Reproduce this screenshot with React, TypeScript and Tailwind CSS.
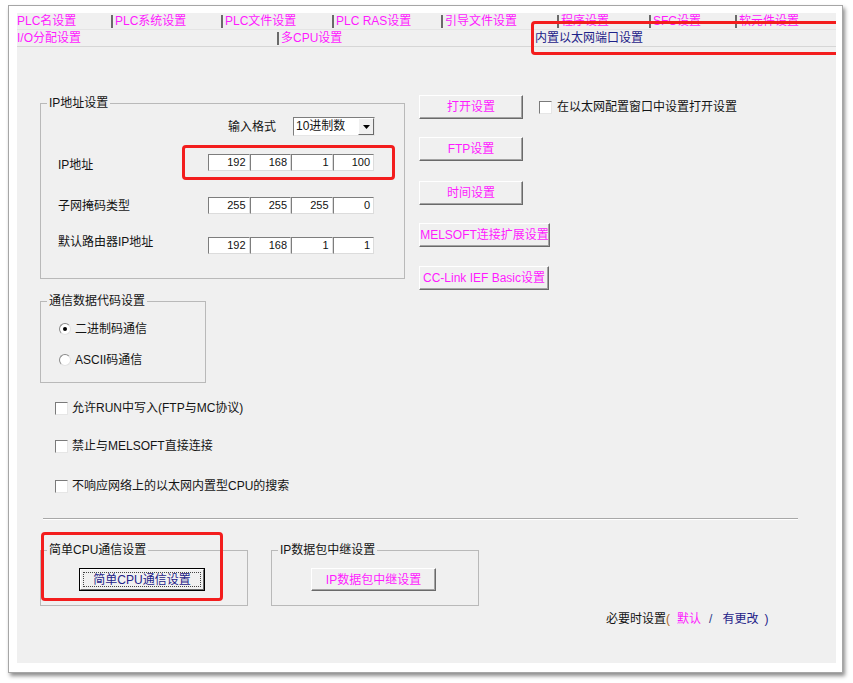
import React from "react";

const row1 = [
  { label: "PLC名设置", w: "w-[94px]" },
  { label: "PLC系统设置", w: "w-[110px]" },
  { label: "PLC文件设置", w: "w-[111px]" },
  { label: "PLC RAS设置", w: "w-[109px]" },
  { label: "引导文件设置", w: "w-[116px]" },
  { label: "程序设置", w: "w-[92px]" },
  { label: "SFC设置", w: "w-[86px]" },
  { label: "软元件设置", w: "flex-1" },
];

const ipRows = [
  { label: "IP地址", values: ["192", "168", "1", "100"], mt: "mt-[18px]", labelPos: "translate-y-[2px]" },
  { label: "子网掩码类型", values: ["255", "255", "255", "0"], mt: "mt-[26px]", labelPos: "" },
  { label: "默认路由器IP地址", values: ["192", "168", "1", "1"], mt: "mt-[23px]", labelPos: "-translate-y-[4px]" },
];

const sideButtons = [
  { label: "打开设置", w: "w-[104px]", mt: "mt-0" },
  { label: "FTP设置", w: "w-[104px]", mt: "mt-[18px]" },
  { label: "时间设置", w: "w-[104px]", mt: "mt-[20px]" },
  { label: "MELSOFT连接扩展设置", w: "w-[131px]", mt: "mt-[18px]" },
  { label: "CC-Link IEF Basic设置", w: "w-[130px]", mt: "mt-[19px]" },
];

const checks = [
  { label: "允许RUN中写入(FTP与MC协议)", mt: "mt-[17px]" },
  { label: "禁止与MELSOFT直接连接", mt: "mt-[22px]" },
  { label: "不响应网络上的以太网内置型CPU的搜索", mt: "mt-[24px]" },
];

function Checkbox() {
  return (
    <span className="w-[13px] h-[13px] shrink-0 bg-white border border-t-[#7a7a7a] border-l-[#7a7a7a] border-r-[#e6e6e6] border-b-[#e6e6e6]" />
  );
}

function Radio({ checked }: { checked?: boolean }) {
  return (
    <span className="w-[12px] h-[12px] shrink-0 rounded-full bg-white border border-t-[#8a8a8a] border-l-[#8a8a8a] border-r-[#e2e2e2] border-b-[#e2e2e2] flex items-center justify-center">
      {checked && <span className="w-[4px] h-[4px] rounded-full bg-black" />}
    </span>
  );
}

function Button({ label, w, h = "h-[24px]" }: { label: string; w: string; h?: string }) {
  return (
    <div
      className={`${w} ${h} flex items-center justify-center bg-[#f0f0f0] border border-t-white border-l-white border-r-[#6a6a6a] border-b-[#6a6a6a] shadow-[inset_-1px_-1px_0_#a3a3a3] text-[#ff1aff] whitespace-nowrap`}
    >
      {label}
    </div>
  );
}

function Group({ title, className, children }: { title: string; className: string; children: React.ReactNode }) {
  return (
    <fieldset className={`border border-[#b9b9b9] ${className}`}>
      <legend className="ml-[6px] px-[2px] leading-4">{title}</legend>
      {children}
    </fieldset>
  );
}

function IpField({ values }: { values: string[] }) {
  return (
    <div className="flex h-[17px]">
      {values.map((v, i) => (
        <span
          key={i}
          className="w-[41.5px] h-[17px] bg-white border border-t-[#7d7d7d] border-l-[#7d7d7d] border-r-[#dcdcdc] border-b-[#dcdcdc] text-right pr-[3px] text-[11px] leading-[15px] text-[#111]"
        >
          {v}
        </span>
      ))}
    </div>
  );
}

export default function App() {
  return (
    <div className="w-[853px] h-[683px] bg-white pt-[5px] pl-[8px] font-['Liberation_Sans','Noto_Sans_CJK_SC',sans-serif] text-[12px] leading-4 text-[#141414]">
      <div className="w-[835px] h-[668px] bg-white border border-[#a6a6a6] shadow-[2px_3px_4px_rgba(0,0,0,0.45)] pl-[8px] pt-[7px]">
        <div className="relative overflow-hidden w-[819px] h-[650px] bg-[#f0f0f0]">
          {/* tabs */}
          <div className="flex h-[17px] items-center border-b border-[#e4e4e4]">
            {row1.map((t, i) => (
              <div key={t.label} className={`${t.w} flex items-center text-[#ff1aff] whitespace-nowrap`}>
                {i > 0 && <span className="w-[2px] h-[13px] bg-[#6a6a6a] mr-[2px]" />}
                {t.label}
              </div>
            ))}
          </div>
          <div className="flex h-[17px] items-center border-b border-[#d6d6d6]">
            <div className="w-[260px] text-[#ff1aff]">I/O分配设置</div>
            <div className="w-[253px] flex items-center text-[#ff1aff]">
              <span className="w-[2px] h-[13px] bg-[#6a6a6a] mr-[2px]" />
              多CPU设置
            </div>
            <div className="pl-[5px] text-[#1e2288]">内置以太网端口设置</div>
          </div>

          {/* body */}
          <div className="pl-[23px] pt-[48px]">
            <div className="flex items-start gap-[14px]">
              <div className="flex flex-col w-[365px]">
                <Group title="IP地址设置" className="w-[365px] pb-[24px]">
                  <div className="flex items-center h-[19px] mt-[6px]">
                    <span className="ml-[187px]">输入格式</span>
                    <div className="ml-[17px] w-[82px] h-[19px] flex bg-white border border-t-[#7d7d7d] border-l-[#7d7d7d] border-r-[#e6e6e6] border-b-[#e6e6e6]">
                      <span className="flex-1 pl-[2px] leading-[17px]">10进制数</span>
                      <span className="w-[16px] h-[17px] flex items-center justify-center bg-[#f0f0f0] border border-t-white border-l-white border-r-[#6a6a6a] border-b-[#6a6a6a]">
                        <svg width="7" height="4" viewBox="0 0 7 4">
                          <path d="M0 0h7L3.5 4z" fill="#000" />
                        </svg>
                      </span>
                    </div>
                  </div>
                  {ipRows.map((r) => (
                    <div key={r.label} className={`flex items-center h-[17px] ${r.mt}`}>
                      <span className={`w-[167px] pl-[17px] ${r.labelPos}`}>{r.label}</span>
                      <IpField values={r.values} />
                    </div>
                  ))}
                </Group>

                <Group title="通信数据代码设置" className="w-[166px] mt-[14px] pb-[14px]">
                  <div className="flex items-center h-[16px] mt-[12px] pl-[18px] gap-[4px]">
                    <Radio checked />
                    <span>二进制码通信</span>
                  </div>
                  <div className="flex items-center h-[16px] mt-[15px] pl-[18px] gap-[4px]">
                    <Radio />
                    <span>ASCII码通信</span>
                  </div>
                </Group>

                {checks.map((c) => (
                  <div key={c.label} className={`flex items-center h-[16px] ml-[15px] gap-[4px] whitespace-nowrap ${c.mt}`}>
                    <Checkbox />
                    <span>{c.label}</span>
                  </div>
                ))}
              </div>

              <div className="flex flex-col">
                {sideButtons.map((b, i) => (
                  <div key={b.label} className={`flex items-center ${b.mt}`}>
                    <Button label={b.label} w={b.w} />
                    {i === 0 && (
                      <div className="flex items-center gap-[5px] ml-[16px] whitespace-nowrap">
                        <Checkbox />
                        <span>在以太网配置窗口中设置打开设置</span>
                      </div>
                    )}
                  </div>
                ))}
              </div>
            </div>

            <div className="ml-[3px] mt-[24px] w-[755px] border-t border-[#a8a8a8] border-b border-b-white" />

            <div className="flex gap-[23px] mt-[22px]">
              <Group title="简单CPU通信设置" className="w-[208px] pb-[14px]">
                <div className="ml-[38px] mt-[10px] w-[126px] h-[23px] border border-black">
                  <div className="w-full h-full bg-[#f0f0f0] border border-t-white border-l-white border-r-[#6a6a6a] border-b-[#6a6a6a] p-[2px]">
                    <div className="w-full h-full border border-dotted border-[#444] flex items-center justify-center text-[#1e2288] whitespace-nowrap">
                      简单CPU通信设置
                    </div>
                  </div>
                </div>
              </Group>
              <Group title="IP数据包中继设置" className="w-[208px] pb-[14px]">
                <div className="ml-[39px] mt-[10px]">
                  <Button label="IP数据包中继设置" w="w-[125px]" h="h-[23px]" />
                </div>
              </Group>
            </div>

            <div className="flex items-center ml-[566px] mt-[5px] whitespace-nowrap">
              <span>必要时设置</span>
              <span className="text-[#b0661c]">(</span>
              <span className="ml-[7px] text-[#ff1aff]">默认</span>
              <span className="ml-[8px] text-[#2a3a8a]">/</span>
              <span className="ml-[10px] text-[#1e2288]">有更改</span>
              <span className="ml-[6px] text-[#1e2288]">)</span>
            </div>
          </div>

          {/* red highlight frames */}
          <div className="absolute left-[514px] top-[8px] w-[340px] h-[34px] border-[3px] border-[#f31d1d] rounded-[4px]" />
          <div className="absolute left-[165px] top-[132px] w-[213px] h-[35px] border-[3px] border-[#f31d1d] rounded-[4px]" />
          <div className="absolute left-[24px] top-[519px] w-[182px] h-[69px] border-[3px] border-[#f31d1d] rounded-[4px]" />
        </div>
      </div>
    </div>
  );
}
